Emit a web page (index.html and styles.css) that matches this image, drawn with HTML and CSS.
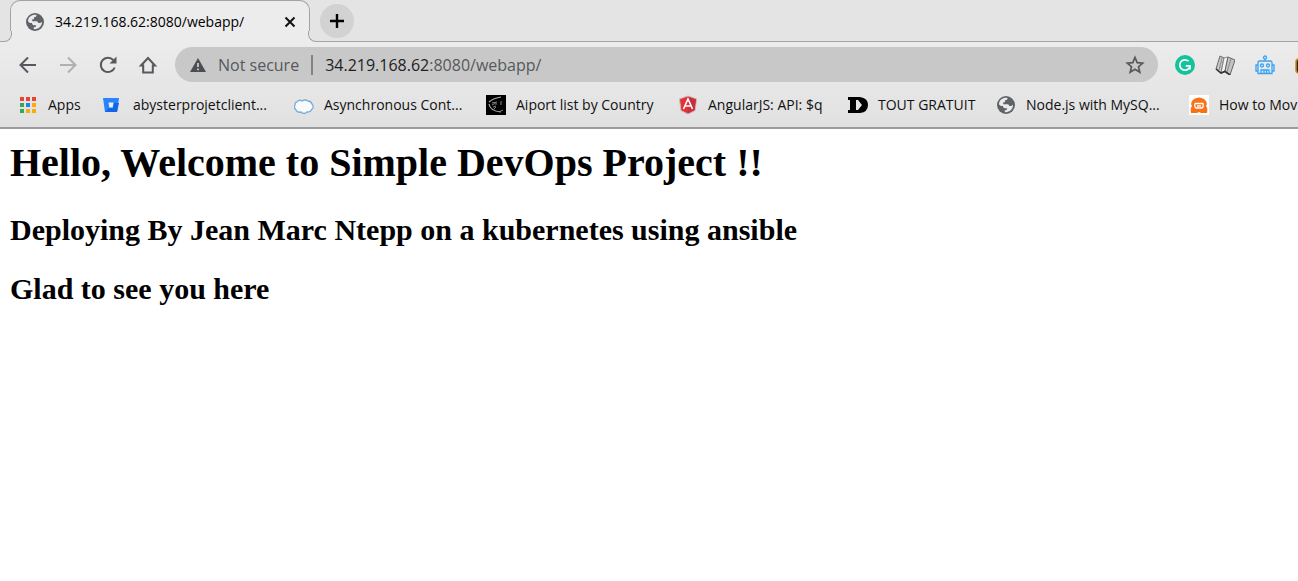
FILE: index.html
```html
<!DOCTYPE html>
<html lang="en">
<head>
<meta charset="utf-8">
<title>34.219.168.62:8080/webapp/</title>
<link rel="stylesheet" href="styles.css">
</head>
<body>
<svg width="0" height="0" class="defs" aria-hidden="true">
  <symbol id="globe" viewBox="0 0 20 20">
    <circle cx="10" cy="10" r="9" fill="#5f6368"/>
    <path d="M3 9.500C3 5 6.500 2.800 10 2.800L11.800 3.100C11.900 4.600 10.600 5.400 9 5.400V7.200H7.200V9.200H11.500C12.600 9.200 13.200 10.200 13.200 11.100H15.300L17 9.800C17.200 14 13.500 17.200 10 17.200L8.800 17V15.300C10.400 15.300 11.200 14.500 11.200 13.200H8.900C7.700 13.200 7 12 7 10.900H4.900Z" fill="#e9e9e9"/>
    <path d="M11.800 3.100C14.800 3.900 16.700 6.300 17 8.600L14.700 8.800C13.200 8.800 12.900 7.200 11.400 7.200H9.100V5.400C10.600 5.400 11.900 4.600 11.800 3.100Z" fill="#5f6368"/>
  </symbol>
</svg>
<header class="browser">
  <div class="tab-strip">
    <div class="tab">
      <svg class="favicon" viewBox="0 0 20 20"><use href="#globe"/></svg>
      <span class="tab-title">34.219.168.62:8080/webapp/</span>
      <button class="close" aria-label="Close tab"><svg width="12" height="12" viewBox="0 0 12 12"><path d="M1.500 1.500L10.500 10.500M10.500 1.500L1.500 10.500" stroke="#111" stroke-width="2"/></svg></button>
    </div>
    <button class="new-tab" aria-label="New tab"><svg width="16" height="16" viewBox="0 0 16 16"><path d="M8 1V15M1 8H15" stroke="#000" stroke-width="2.400"/></svg></button>
  </div>
  <div class="toolbar">
    <nav class="nav" aria-label="Navigation">
      <button aria-label="Back"><svg viewBox="0 0 20 20"><path d="M18 10H3M10 2.500L2.500 10L10 17.500" stroke="#55585c"/></svg></button>
      <button aria-label="Forward"><svg viewBox="0 0 20 20"><path d="M2 10H17M10 2.500L17.500 10L10 17.500" stroke="#b0b0b0"/></svg></button>
      <button aria-label="Reload"><svg viewBox="0 0 20 20"><path d="M16.700 12.500A7.200 7.200 0 1 1 15.300 5" stroke="#55585c"/><path d="M18.500 1.500V8.500H11.500Z" fill="#55585c"/></svg></button>
      <button aria-label="Home"><svg viewBox="0 0 20 20"><path d="M3 10.500L10 3L17 10.500H14.800V17.500H5.200V10.500Z" stroke="#55585c"/></svg></button>
    </nav>
    <div class="address">
      <svg class="warning" viewBox="0 0 16 14"><path d="M8 0L16 14H0Z" fill="#4b4e52"/><path d="M8 5V9M8 10.500V12.300" stroke="#c8c8c8" stroke-width="1.800"/></svg>
      <span class="secure">Not secure</span>
      <span class="divider"></span>
      <span class="url"><span class="host">34.219.168.62</span>:8080/webapp/</span>
      <button class="star" aria-label="Bookmark this page"><svg width="20" height="20" viewBox="0 0 20 20"><path d="M10 2.500L12.200 7.600L17.700 8.100L13.500 11.700L14.800 17.200L10 14.200L5.200 17.200L6.500 11.700L2.300 8.100L7.800 7.600Z" fill="none" stroke="#55585c" stroke-width="1.700"/></svg></button>
    </div>
    <div class="extensions">
      <button aria-label="Grammarly"><svg viewBox="0 0 20 20"><circle cx="10" cy="10" r="10" fill="#15c39a"/><path d="M13.500 6.200A5.200 5.200 0 1 0 15 11.300" fill="none" stroke="#fff" stroke-width="1.700"/><path d="M10.800 10.800H15V14.500" fill="none" stroke="#fff" stroke-width="1.700"/></svg></button>
      <button aria-label="Reader"><svg viewBox="0 0 20 20"><path d="M5 1L9 3L6 18L1 14Z" fill="#c9c9c9" stroke="#666"/><path d="M9 3L13 2L10 16L6 18Z" fill="#f2f2f2" stroke="#888"/><path d="M13 2L20 5L15 20L10 16Z" fill="#c4c4c4" stroke="#666"/><path d="M1 14L6 18L10 16.500L15 20" fill="none" stroke="#333" stroke-width="1.600"/><path d="M7 3L4 15M16 4L12 17" stroke="#888"/></svg></button>
      <button aria-label="Robot"><svg viewBox="0 0 20 20"><g fill="none" stroke="#38a3f5" stroke-width="1.300"><circle cx="10" cy="2.500" r="1.500"/><path d="M10 4V6M3 18.500V7.500Q3 6 5 6H15Q17 6 17 7.500V18.500ZM3 10H1V16H3M17 10H19V16H17M6 18.500V15H14V18.500M9 15V18M11.500 15V18"/><circle cx="7" cy="10.500" r="1.500"/><circle cx="13" cy="10.500" r="1.500"/></g></svg></button>
      <button aria-label="Extension"><svg viewBox="0 0 20 20"><rect x="1" y="4" width="18" height="14" rx="3" fill="#2b2416" stroke="#c98a1b" stroke-width="1.500"/></svg></button>
    </div>
  </div>
  <nav class="bookmarks" aria-label="Bookmarks">
    <a href="#"><svg viewBox="0 0 20 20"><g fill="#ea4335"><path d="M2 2h4v4H2zM8 2h4v4H8zM14 2h4v4h-4z"/></g><path d="M2 8h4v4H2zM2 14h4v4H2z" fill="#34a853"/><path d="M8 8h4v4H8z" fill="#1a86f0"/><path d="M14 8h4v4h-4zM8 14h4v4H8zM14 14h4v4h-4z" fill="#fbab09"/></svg><span>Apps</span></a>
    <a href="#"><svg viewBox="0 0 20 20"><path d="M0 3H16L14 17H2Z" fill="#2684ff"/><path d="M11 8H16L14 17H2L6 13H10Z" fill="#1266e8"/><path d="M5.500 7.500H10.500L9.700 12.500H6.300Z" fill="#eee"/></svg><span>abysterprojetclient...</span></a>
    <a href="#"><svg viewBox="0 0 20 20"><path d="M3 7Q5 4 8 6Q11 4 14 6Q17 6 18 9Q20.500 12 18 14Q17 17 13 17Q10 20 7 17Q3 18 2 15Q-.5 12 1 10Q1 7 3 7Z" fill="#f8fafc" stroke="#79add8" stroke-width="1.300"/></svg><span>Asynchronous Cont...</span></a>
    <a href="#"><svg viewBox="0 0 20 20"><path d="M0 0H20V20H0Z"/><g fill="none" stroke="#aaa"><path d="M3 7Q8 3 15 2M3 9Q4 16 15 17" stroke-width="1.200"/><path d="M6 8L11 7M6 10Q8 8 11 9M7 12L10 11M8 14L10 12M15 6V10M13 17L17 15" stroke="#888"/></g></svg><span>Aiport list by Country</span></a>
    <a href="#"><svg viewBox="0 0 20 20"><path d="M10 1L18.500 4L17 15.500L10 19L3 15.500L1.500 4Z" fill="#e23237" stroke="#c9b2b2"/><path d="M10 2L18 4.500L16.500 15L10 18Z" fill="#c8303a"/><path d="M5.500 14L10 4L14.500 14M7.500 11H12.500" fill="none" stroke="#fff" stroke-width="1.600"/></svg><span>AngularJS: API: $q</span></a>
    <a href="#"><svg viewBox="0 0 20 20"><path fill-rule="evenodd" d="M0 2H12Q20 3 20 10Q20 17 12 18H0V15H2V5H0ZM8 5V15H10L14 10L10 5Z"/></svg><span>TOUT GRATUIT</span></a>
    <a href="#"><svg viewBox="0 0 20 20"><use href="#globe"/></svg><span>Node.js with MySQ...</span></a>
    <a href="#"><svg viewBox="0 0 20 20"><path d="M0 0H20V20H0Z" fill="#fff"/><path d="M5 4Q10 1 15 4Q18 6 18 9L17 11Q19 13 18 18H12L10 17L8 18H2Q1 13 3 11L2 9Q2 6 5 4Z" fill="#f97316"/><path d="M6 8.500H14Q15 13 12 13H8Q5 13 6 8.500M8 11H12" fill="none" stroke="#fff" stroke-width="1.300"/></svg><span>How to Mov</span></a>
  </nav>
</header>
<main class="page">
  <h1>Hello, Welcome to Simple DevOps Project !!</h1>
  <h2>Deploying By Jean Marc Ntepp on a kubernetes using ansible</h2>
  <h2>Glad to see you here</h2>
</main>
</body>
</html>
```
FILE: styles.css
```css
* { box-sizing: border-box; }
body { margin: 0; background: #fff; color: #000; overflow-x: hidden; }
button { border: 0; padding: 0; background: none; display: flex; align-items: center; justify-content: center; }
.defs { position: absolute; }

.browser {
  background: linear-gradient(#ececec 42px, #e1e1e1);
  border-bottom: 2px solid #9c9c9c;
  font-family: "Open Sans", "Noto Sans", sans-serif;
  font-size: 14px;
  overflow: hidden;
}

.tab-strip {
  display: flex;
  align-items: center;
  gap: 10px;
  height: 42px;
  padding-left: 10px;
  background: #e4e4e4;
  border-bottom: 1px solid #a3a3a3;
}
.tab {
  position: relative;
  display: flex;
  align-items: center;
  width: 300px;
  height: 42px;
  margin-bottom: -1px;
  padding: 0 9px 0 14px;
  background: #ececec;
  border: 1px solid #a3a3a3;
  border-bottom: 0;
  border-radius: 10px 10px 0 0;
}
.tab::before,
.tab::after {
  content: "";
  position: absolute;
  bottom: 0;
  width: 11px;
  height: 10px;
  border-bottom: 1px solid #a3a3a3;
  background: #e4e4e4;
}
.tab::before { left: -11px; border-right: 1px solid #a3a3a3; border-bottom-right-radius: 8px; box-shadow: 3px 3px 0 #ececec; }
.tab::after { right: -11px; border-left: 1px solid #a3a3a3; border-bottom-left-radius: 8px; box-shadow: -3px 3px 0 #ececec; }
.favicon { width: 20px; height: 20px; margin-right: 10px; }
.tab-title { flex: 1; }
.close { width: 20px; height: 20px; }
.new-tab { width: 34px; height: 34px; border-radius: 50%; background: #d2d2d2; }

.toolbar { display: flex; align-items: center; height: 45px; padding-left: 18px; }
.nav { display: flex; gap: 20px; margin-right: 17px; }
.nav button, .nav svg { width: 20px; height: 20px; }
.nav svg { fill: none; stroke-width: 2; }
.address {
  display: flex;
  align-items: center;
  flex: 1;
  height: 35px;
  padding: 0 13px 0 15px;
  border-radius: 18px;
  background: #c8c8c8;
  color: #55585c;
  font-size: 16px;
}
.warning { width: 16px; height: 14px; margin-right: 12px; }
.divider { width: 2px; height: 20px; margin: 0 12px; background: #808285; }
.url { flex: 1; }
.host { color: #1f2123; }
.extensions { display: flex; gap: 20px; margin: 0 -17px 0 17px; }
.extensions button, .extensions svg { width: 20px; height: 20px; }

.bookmarks {
  display: grid;
  grid-template-columns: 85px 191px 192px 192px 170px 148px 193px auto;
  justify-content: start;
  align-items: center;
  height: 40px;
  padding: 0 0 5px 18px;
}
.bookmarks a { display: flex; align-items: center; gap: 10px; color: #111; text-decoration: none; white-space: nowrap; }
.bookmarks svg { flex: none; width: 20px; height: 20px; }

.page { padding: 11px 10px; font-family: "Liberation Serif", serif; }
.page h1 { margin: 0 0 27px; font-size: 40px; line-height: 46px; }
.page h2 { margin: 0 0 25px; font-size: 30px; line-height: 34px; }
```
